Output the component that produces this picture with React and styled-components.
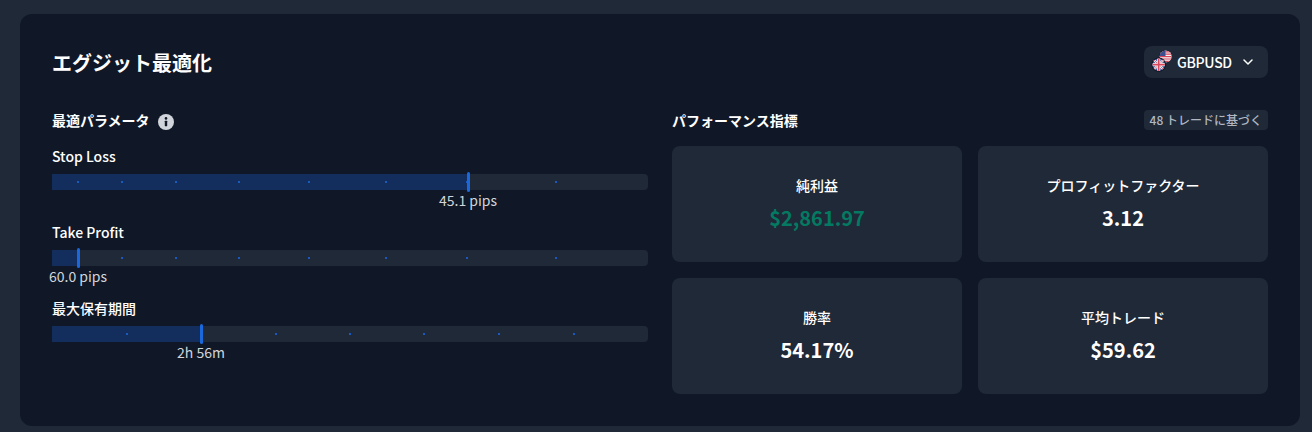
import React from "react";
import styled, { createGlobalStyle } from "styled-components";

const Global = createGlobalStyle`
  html, body { margin: 0; padding: 0; background: #1f2937; }
  body { font-family: "Noto Sans CJK JP", "Noto Sans", sans-serif; }
  * { box-sizing: border-box; }
`;

const Page = styled.div`
  width: 1312px;
  height: 432px;
  padding: 14px 12px 6px 20px;
  background: #1f2937;
  overflow: hidden;
`;
const Card = styled.section`
  height: 412px;
  padding: 32px;
  background: #101827;
  border-radius: 12px;
`;
const Header = styled.header`
  display: flex;
  justify-content: space-between;
  align-items: center;
  height: 32px;
  margin-bottom: 32px;
`;
const Title = styled.h2`
  margin: 0;
  padding-top: 1px;
  font-size: 20px;
  line-height: 28px;
  font-weight: 700;
  color: #fff;
`;
const PairButton = styled.button`
  display: flex;
  align-items: center;
  width: 124px;
  height: 32px;
  padding: 0 0 0 6px;
  border: 0;
  border-radius: 8px;
  background: #1f2937;
  color: #fff;
  font: 500 14px/20px "Noto Sans CJK JP", sans-serif;
  letter-spacing: -0.3px;
`;
const Flags = styled.svg`
  width: 22px;
  height: 24px;
  margin-right: 5px;
  flex: none;
`;
const Chevron = styled.svg`
  width: 10px;
  height: 6px;
  margin-left: 11px;
  flex: none;
`;
const Columns = styled.div`
  display: grid;
  grid-template-columns: 596px 596px;
  gap: 24px;
`;
const SectionHead = styled.div`
  display: flex;
  align-items: center;
  justify-content: space-between;
  height: 20px;
  margin-bottom: 16px;
`;
const ParamHead = styled.div`
  display: flex;
  align-items: center;
  gap: 7px;
  height: 20px;
  margin-bottom: 16px;
`;
const SectionTitle = styled.h3`
  margin: 0;
  font-size: 14px;
  line-height: 20px;
  font-weight: 700;
  color: #fff;
`;
const InfoIcon = styled.svg`
  width: 18px;
  height: 18px;
  margin-top: 4px;
  flex: none;
`;
const Badge = styled.span`
  display: inline-block;
  height: 20px;
  padding: 0 6px;
  border-radius: 4px;
  background: #1f2937;
  color: #b0b7c3;
  font-size: 12px;
  line-height: 20px;
  font-weight: 500;
`;
const Param = styled.div`
  height: 76px;
`;
const ParamLabel = styled.div`
  height: 20px;
  margin-bottom: 8px;
  font-size: 14px;
  line-height: 20px;
  font-weight: 500;
  color: #fff;
`;
const Track = styled.div`
  position: relative;
  height: 16px;
  border-radius: 0 4px 4px 0;
  background: #1f2937;
`;
const Fill = styled.div`
  height: 100%;
  background: #132d5c;
`;
const Mark = styled.i`
  position: absolute;
  top: 7px;
  width: 2px;
  height: 2px;
  margin-left: -1px;
  background: #1a5abe;
`;
const Thumb = styled.i`
  position: absolute;
  top: -2px;
  width: 3px;
  height: 20px;
  margin-left: -1.5px;
  border-radius: 2px;
  background: #1b68dc;
`;
const ThumbValue = styled.span`
  position: absolute;
  top: 16px;
  transform: translateX(-50%);
  font-size: 14px;
  line-height: 20px;
  color: #d1d5db;
  white-space: nowrap;
`;
const MetricGrid = styled.div`
  display: grid;
  grid-template-columns: 290px 290px;
  grid-auto-rows: 116px;
  gap: 16px;
`;
const Metric = styled.div`
  display: flex;
  flex-direction: column;
  align-items: center;
  justify-content: center;
  border-radius: 8px;
  background: #1f2937;
`;
const MetricLabel = styled.div`
  font-size: 14px;
  line-height: 20px;
  font-weight: 500;
  color: #fff;
  margin-bottom: 8px;
`;
const MetricValue = styled.div`
  font-size: 20px;
  line-height: 30px;
  font-weight: 700;
  color: ${(p) => (p.$positive ? "#047a62" : "#fff")};
`;

const params = [
  { label: "Stop Loss", value: "45.1 pips", at: 416, marks: [26, 70, 124, 187, 257, 334, 415, 504] },
  { label: "Take Profit", value: "60.0 pips", at: 26, marks: [26, 70, 124, 187, 257, 334, 415, 504] },
  { label: "最大保有期間", value: "2h 56m", at: 149, marks: [75, 149, 224, 298, 372, 447, 522] },
];
const metrics = [
  { label: "純利益", value: "$2,861.97", positive: true },
  { label: "プロフィットファクター", value: "3.12" },
  { label: "勝率", value: "54.17%" },
  { label: "平均トレード", value: "$59.62" },
];

const FlagPair = () => (
  <Flags viewBox="0 0 22 24" aria-hidden="true">
    <defs>
      <clipPath id="us"><circle cx="15.7" cy="6.5" r="6" /></clipPath>
      <clipPath id="uk"><circle cx="8.7" cy="14.7" r="6.2" /></clipPath>
    </defs>
    <circle cx="15.7" cy="6.5" r="6.5" fill="#101827" />
    <g clipPath="url(#us)">
      <rect x="9" y="0" width="13" height="13" fill="#f3f4f6" />
      <path d="M9 1.8h13M9 4.2h13M9 6.6h13M9 9h13M9 11.4h13" stroke="#d9465a" strokeWidth="1.2" />
      <rect x="9" y="0" width="6.5" height="6" fill="#3a4f8f" />
    </g>
    <circle cx="8.7" cy="14.7" r="7.2" fill="#101827" />
    <g clipPath="url(#uk)">
      <rect x="2" y="8" width="13" height="13" fill="#3f5aa0" />
      <path d="M2.7 8.7l12 12M14.7 8.7l-12 12" stroke="#f3f4f6" strokeWidth="2.2" />
      <path d="M2.7 8.7l12 12M14.7 8.7l-12 12" stroke="#d9465a" strokeWidth="0.8" />
      <path d="M8.7 8v13M2 14.7h13" stroke="#f3f4f6" strokeWidth="3.2" />
      <path d="M8.7 8v13M2 14.7h13" stroke="#d9465a" strokeWidth="1.7" />
    </g>
  </Flags>
);

export default function App() {
  return (
    <>
      <Global />
      <Page>
        <Card>
          <Header>
            <Title>エグジット最適化</Title>
            <PairButton>
              <FlagPair />
              GBPUSD
              <Chevron viewBox="0 0 10 6" fill="none" aria-hidden="true">
                <path d="M1 1l4 4 4-4" stroke="#fff" strokeWidth="1.5" strokeLinecap="round" strokeLinejoin="round" />
              </Chevron>
            </PairButton>
          </Header>
          <Columns>
            <div>
              <ParamHead>
                <SectionTitle>最適パラメータ</SectionTitle>
                <InfoIcon viewBox="0 0 18 18" aria-hidden="true">
                  <circle cx="9" cy="9" r="8" fill="#d1d5db" />
                  <circle cx="9" cy="5.4" r="1.3" fill="#101827" />
                  <rect x="7.8" y="7.8" width="2.4" height="5.4" rx="0.4" fill="#101827" />
                </InfoIcon>
              </ParamHead>
              {params.map((p) => (
                <Param key={p.label}>
                  <ParamLabel>{p.label}</ParamLabel>
                  <Track>
                    <Fill style={{ width: p.at }} />
                    {p.marks.map((m) => (
                      <Mark key={m} style={{ left: m }} />
                    ))}
                    <Thumb style={{ left: p.at }} />
                    <ThumbValue style={{ left: p.at }}>{p.value}</ThumbValue>
                  </Track>
                </Param>
              ))}
            </div>
            <div>
              <SectionHead>
                <SectionTitle>パフォーマンス指標</SectionTitle>
                <Badge>48 トレードに基づく</Badge>
              </SectionHead>
              <MetricGrid>
                {metrics.map((m) => (
                  <Metric key={m.label}>
                    <MetricLabel>{m.label}</MetricLabel>
                    <MetricValue $positive={m.positive}>{m.value}</MetricValue>
                  </Metric>
                ))}
              </MetricGrid>
            </div>
          </Columns>
        </Card>
      </Page>
    </>
  );
}
